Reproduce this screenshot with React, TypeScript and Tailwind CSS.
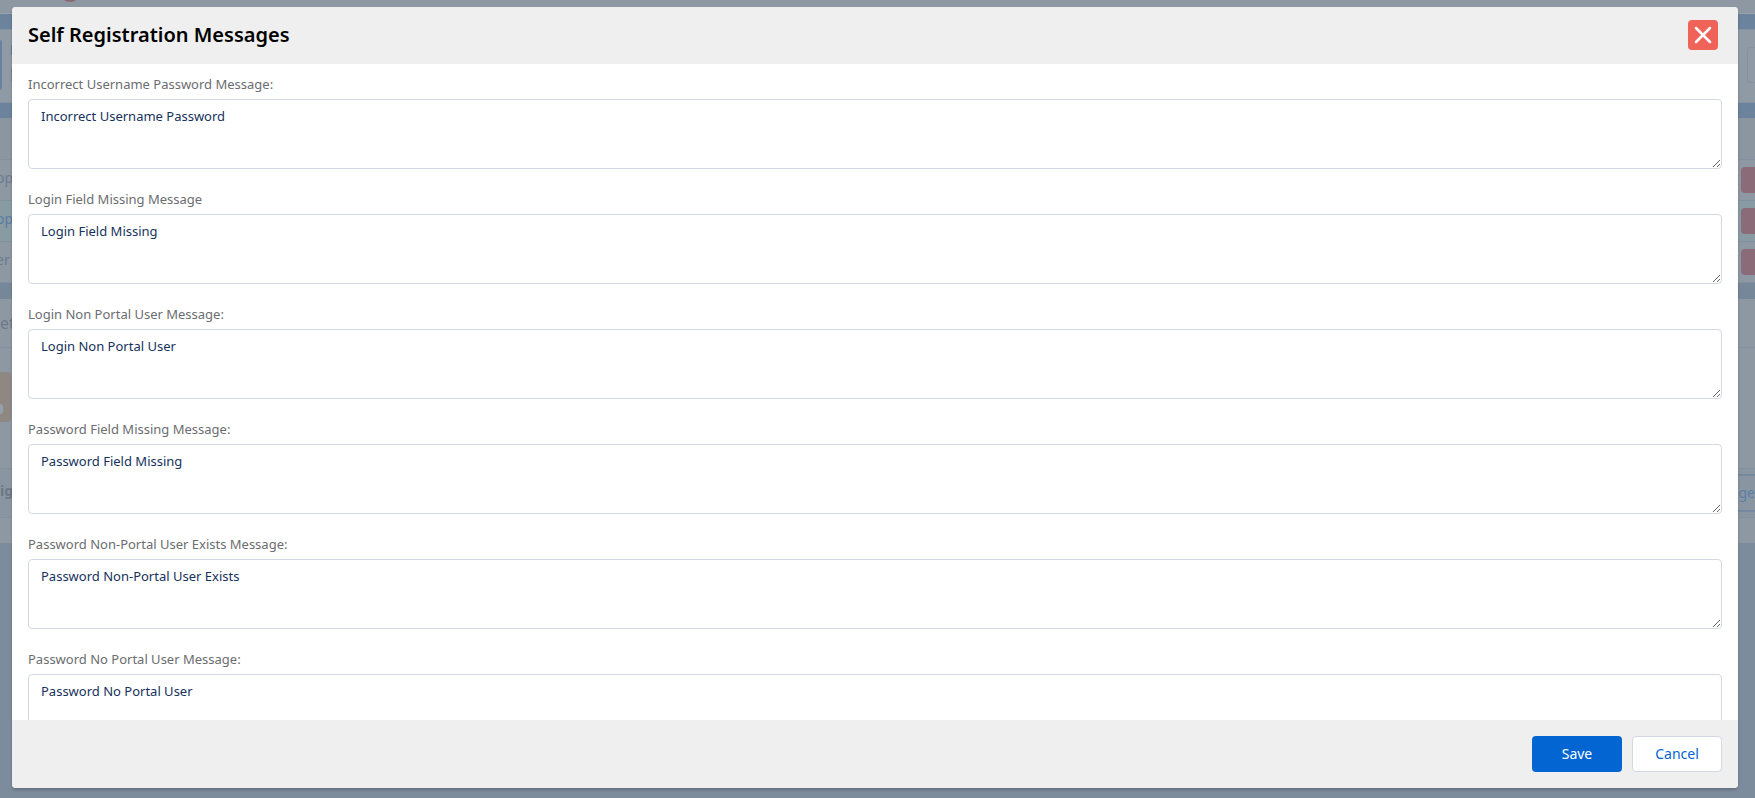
import { X } from "lucide-react";

const fields = [
  { id: "incorrect", label: "Incorrect Username Password Message:", value: "Incorrect Username Password" },
  { id: "login-missing", label: "Login Field Missing Message", value: "Login Field Missing" },
  { id: "login-non-portal", label: "Login Non Portal User Message:", value: "Login Non Portal User" },
  { id: "password-missing", label: "Password Field Missing Message:", value: "Password Field Missing" },
  { id: "password-non-portal", label: "Password Non-Portal User Exists Message:", value: "Password Non-Portal User Exists" },
  { id: "password-no-portal", label: "Password No Portal User Message:", value: "Password No Portal User" },
];

const rows = [
  { text: "op", className: "bg-[#8d98a3] text-[#6c7c8e]" },
  { text: "op", className: "bg-[#889ba3] text-[#587c9f]" },
  { text: "er", className: "bg-[#8d98a3] text-[#6c7c8e]" },
];

function Backdrop() {
  return (
    <div aria-hidden="true" className="h-full overflow-hidden bg-[#7d8c9d]">
      <div className="h-[14px] overflow-hidden border-b border-[#98a2ac] bg-[#8d98a3] pl-[60px]">
        <div className="-mt-[18px] size-5 rounded-full bg-[#8b6673]" />
      </div>
      <div className="h-[15px] bg-[#6b839d]" />
      <div className="flex h-[74px] items-start border-y border-[#8592a0] bg-[#8f9aa4]">
        <div className="mt-[10px] h-[50px] w-[2px] rounded-r-sm bg-[#6583a2]" />
        <div className="mt-[15px] ml-[9px] flex flex-col gap-[13px]">
          <div className="h-[10px] w-px bg-[#6583a2]" />
          <div className="h-[14px] w-px bg-[#7b8794]" />
        </div>
        <div className="mt-[17px] ml-auto h-[36px] w-2 rounded-l border border-r-0 border-[#8592a0]" />
      </div>
      <div className="h-[15px] bg-[#6b839d]" />
      <div className="h-[42px] border-b border-[#8290a0] bg-[#8b96a1]" />
      {rows.map((row, index) => (
        <div
          key={index}
          className={`flex h-[41px] items-center justify-between border-b border-[#8290a0] text-sm ${row.className}`}
        >
          <span className="-ml-1 pb-1">{row.text}</span>
          <div className="h-[26px] w-[14px] rounded-l bg-[#8b6b78]" />
        </div>
      ))}
      <div className="h-[16px] bg-[#76879a]" />
      <div className="flex h-[49px] items-center border-b border-[#8290a0] bg-[#8d98a3] text-base text-[#6e7a88]">
        et
      </div>
      <div className="flex h-[121px] items-start border-b border-[#8290a0] bg-[#8d98a3] pt-[24px]">
        <div className="flex h-[50px] w-[11px] items-end rounded-r-sm bg-[#8e8782] pb-2">
          <div className="h-[10px] w-[3px] rounded-r-full bg-[#95a0ad]" />
        </div>
      </div>
      <div className="flex h-[49px] items-center justify-between border-b border-[#8290a0] bg-[#8996a2]">
        <span className="pb-1 text-sm font-bold text-[#6c7885]">ig</span>
        <span className="flex h-[38px] items-center border-y-2 border-[#7489a1] text-sm text-[#5c7fa5]">
          nge
        </span>
      </div>
      <div className="h-[25px] bg-[#8d98a3]" />
    </div>
  );
}

export default function App() {
  return (
    <div className="relative h-screen overflow-hidden font-['Noto_Sans',sans-serif]">
      <Backdrop />
      <div className="absolute inset-0 flex pt-[7px] pr-[17px] pb-[10px] pl-3">
        <section
          role="dialog"
          aria-labelledby="dialog-title"
          className="flex min-w-0 flex-1 flex-col overflow-hidden rounded bg-white shadow-[0_2px_3px_rgba(0,0,0,0.2)]"
        >
          <header className="flex h-[57px] shrink-0 items-center justify-between bg-[#efefef] pr-5 pb-0.5 pl-4">
            <h2 id="dialog-title" className="text-xl font-semibold text-black">
              Self Registration Messages
            </h2>
            <button
              type="button"
              aria-label="Close"
              className="flex size-[30px] items-center justify-center rounded bg-[#ef6358] text-white"
            >
              <X size={28} strokeWidth={2.2} />
            </button>
          </header>

          <div className="flex min-h-0 flex-1 flex-col gap-5 overflow-hidden px-4 pt-[10px]">
            {fields.map((field) => (
              <div key={field.id} className="flex shrink-0 flex-col gap-[5px]">
                <label htmlFor={field.id} className="text-[13px] leading-5 text-[#6b6d70]">
                  {field.label}
                </label>
                <textarea
                  id={field.id}
                  defaultValue={field.value}
                  className="h-[70px] w-full resize-y rounded border border-[#d4d8e4] bg-white px-3 py-1.5 text-[13px] leading-5 text-[#16325c]"
                />
              </div>
            ))}
          </div>

          <footer className="flex h-[68px] shrink-0 items-center justify-end gap-[10px] bg-[#efefef] px-4">
            <button type="button" className="h-9 w-[90px] rounded bg-[#0265d2] text-sm text-white">
              Save
            </button>
            <button
              type="button"
              className="h-9 w-[90px] rounded border border-[#d4d8e4] bg-white text-sm text-[#0265d2]"
            >
              Cancel
            </button>
          </footer>
        </section>
      </div>
    </div>
  );
}
